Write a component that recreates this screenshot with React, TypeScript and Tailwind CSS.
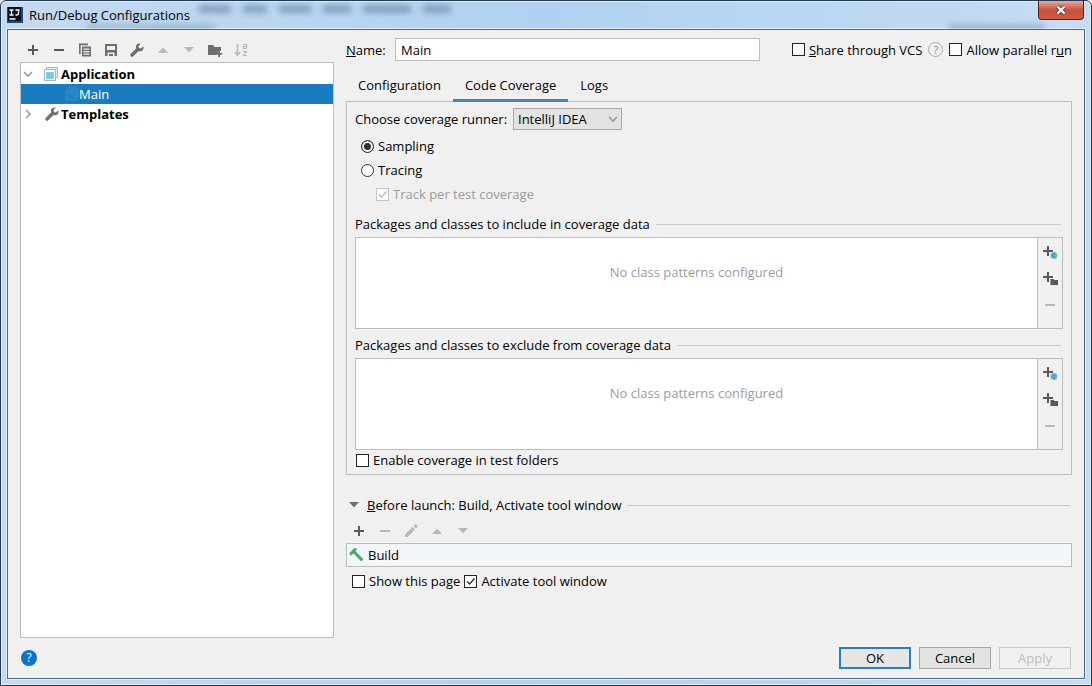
import { useState } from "react";
import type { ReactNode } from "react";

type IconProps = { className?: string };

const PlusIcon = ({ className = "text-[#595959]" }: IconProps) => (
  <svg width="16" height="16" viewBox="0 0 16 16" className={className} aria-hidden="true">
    <path d="M7 3h2v4h4v2H9v4H7V9H3V7h4z" fill="currentColor" />
  </svg>
);

const MinusIcon = ({ className = "text-[#595959]" }: IconProps) => (
  <svg width="16" height="16" viewBox="0 0 16 16" className={className} aria-hidden="true">
    <path d="M3 7h10v2H3z" fill="currentColor" />
  </svg>
);

const CopyIcon = () => (
  <svg width="16" height="16" viewBox="0 0 16 16" aria-hidden="true">
    <path d="M2 1.500h9v1.700H3.700V12H2z" fill="#6e6e6e" />
    <path d="M5 4.500h9v10H5zM6.500 6.500v1.200h6V6.500zm0 2.500v1.200h6V9zm0 2.500v1.200h6v-1.200z" fill="#6e6e6e" fillRule="evenodd" />
  </svg>
);

const SaveIcon = () => (
  <svg width="16" height="16" viewBox="0 0 16 16" aria-hidden="true">
    <path d="M2 2h12v12h-2.500v-3.500h-7V14H2zM4 4v4h8V4z" fill="#6e6e6e" fillRule="evenodd" />
    <path d="M6 12h4v2H6z" fill="#6e6e6e" />
  </svg>
);

const WrenchIcon = ({ className = "text-[#6e6e6e]" }: IconProps) => (
  <svg width="16" height="16" viewBox="0 0 16 16" className={className} aria-hidden="true">
    <path
      d="M14.300 4.300 12 6.400 9.900 5.900 9.500 3.900 11.700 1.800C9.900 1.200 8 1.900 7.200 3.500c-.5 1-.5 2 0 3L1.800 11.800a1.600 1.600 0 0 0 2.400 2.400L9.600 9c1.500.6 3.200.2 4.200-1 .9-1.100 1-2.500.5-3.700z"
      fill="currentColor"
    />
  </svg>
);

const UpIcon = () => (
  <svg width="16" height="16" viewBox="0 0 16 16" aria-hidden="true">
    <path d="M8 5.500 13 11H3z" fill="#b9b9b9" />
  </svg>
);

const DownIcon = ({ className = "text-[#b9b9b9]" }: IconProps) => (
  <svg width="16" height="16" viewBox="0 0 16 16" className={className} aria-hidden="true">
    <path d="M3 5h10l-5 5.500z" fill="currentColor" />
  </svg>
);

const NewFolderIcon = () => (
  <svg width="16" height="16" viewBox="0 0 16 16" aria-hidden="true">
    <path d="M1 3h5l1.500 2H14v4h-3v2H9v2H1z" fill="#6e6e6e" />
    <path d="M11.200 8.800h1.800V11h2.200v1.800H13V15h-1.800v-2.200H9V11h2.200z" fill="#6e6e6e" />
  </svg>
);

const SortIcon = () => (
  <svg width="16" height="16" viewBox="0 0 16 16" aria-hidden="true" fill="none" stroke="#b9b9b9">
    <path d="M4.500 2v11M1.800 10l2.700 3 2.700-3" strokeWidth="1.600" />
    <path d="M10 2.500h3.500V7M13.500 4.500H10.500V6.500h3M10 9.500h3.500L10.500 13.500H14" strokeWidth="1.200" />
  </svg>
);

const PencilIcon = () => (
  <svg width="16" height="16" viewBox="0 0 16 16" aria-hidden="true" fill="#b9b9b9">
    <path d="m9.500 4 2.500 2.500L4.500 14H2v-2.500zM10.500 3l1.500-1.500a.8.8 0 0 1 1.100 0L14.500 2.900a.8.8 0 0 1 0 1.100L13 5.500z" />
  </svg>
);

const HammerIcon = () => (
  <svg width="16" height="16" viewBox="0 0 16 16" aria-hidden="true" fill="#4fa66b">
    <path d="M1 6.500 6 1.200l3.500.3L7.400 4l7.900 8.300-2.100 2.200L5.400 6.200 3.200 8.700z" />
  </svg>
);

const AddClassIcon = () => (
  <svg width="16" height="16" viewBox="0 0 16 16" aria-hidden="true">
    <path d="M5 1h2v4h4v2H7v4H5V7H1V5h4z" fill="#595959" />
    <circle cx="12" cy="10.500" r="3.500" fill="#6bbcdc" />
    <path d="M13.300 9.600a1.600 1.600 0 1 0 0 1.800" fill="none" stroke="#3a7d9c" />
  </svg>
);

const AddPackageIcon = () => (
  <svg width="16" height="16" viewBox="0 0 16 16" aria-hidden="true">
    <path d="M5 1h2v4h4v2H7v4H5V7H1V5h4z" fill="#595959" />
    <path d="M8.500 8h3l1 1H16v5H8.500z" fill="#595959" />
  </svg>
);

const AppIcon = () => (
  <svg width="14" height="14" viewBox="0 0 14 14" aria-hidden="true">
    <path d="M2.500.5h11v10h-11z" fill="#e4eaec" stroke="#a9b4ba" />
    <path d="M.5 2.500h11v11H.5z" fill="#fff" stroke="#a9b4ba" />
    <path d="M2 5h8v7H2z" fill="#7fcbe0" />
  </svg>
);

const ChevronIcon = ({ open }: { open: boolean }) => (
  <svg width="12" height="12" viewBox="0 0 12 12" aria-hidden="true" fill="none" stroke="#9a9a9a" strokeWidth="1.600">
    <path d={open ? "m2 4 4 4 4-4" : "m4 2 4 4-4 4"} />
  </svg>
);

type ToolProps = { label: string; disabled?: boolean; children: ReactNode };

const Tool = ({ label, disabled, children }: ToolProps) => (
  <button type="button" aria-label={label} disabled={disabled} className="flex h-6 w-[26px] items-center justify-center">
    {children}
  </button>
);

type CheckProps = { checked?: boolean; disabled?: boolean; children: ReactNode };

const Check = ({ checked = false, disabled, children }: CheckProps) => {
  const [on, setOn] = useState(checked);

  return (
    <label className="flex h-5 items-center gap-1 whitespace-nowrap has-[:disabled]:text-[#9b9b9b]">
      <span className="grid">
        <input
          type="checkbox"
          checked={on}
          disabled={disabled}
          onChange={() => setOn(!on)}
          className="peer col-start-1 row-start-1 size-[13px] appearance-none border border-[#222] bg-white disabled:border-[#c4c4c4]"
        />
        <svg
          width="13"
          height="13"
          viewBox="0 0 13 13"
          aria-hidden="true"
          className="pointer-events-none invisible col-start-1 row-start-1 text-[#333] peer-checked:visible peer-disabled:text-[#b8b8b8]"
        >
          <path d="m3 6.500 2.500 2.500 5-5.500" fill="none" stroke="currentColor" strokeWidth="1.400" />
        </svg>
      </span>
      <span>{children}</span>
    </label>
  );
};

type RadioProps = { label: string; checked: boolean; onSelect: () => void };

const Radio = ({ label, checked, onSelect }: RadioProps) => (
  <label className="flex h-6 items-center gap-1 pl-1.5">
    <input
      type="radio"
      name="mode"
      checked={checked}
      onChange={onSelect}
      className="size-[13px] appearance-none rounded-full border border-[#333] bg-white checked:bg-[#333] checked:shadow-[inset_0_0_0_2px_white]"
    />
    {label}
  </label>
);

const GroupTitle = ({ children }: { children: ReactNode }) => (
  <div className="flex h-5 flex-1 items-center gap-1.5 pr-0.5">
    <span>{children}</span>
    <span className="h-px flex-1 bg-[#c9c9c9]" />
  </div>
);

// Liste de motifs avec ses boutons sur le côté
const PatternList = () => (
  <div className="mt-[3px] flex h-[92px] border border-[#bcbcbc]">
    <p className="flex-1 bg-white pt-6 text-center text-[#9b9b9b]">No class patterns configured</p>
    <div className="flex w-[25px] flex-col items-center gap-0.5 border-l border-[#bcbcbc] pt-[3px]">
      <Tool label="Add class"><AddClassIcon /></Tool>
      <Tool label="Add package"><AddPackageIcon /></Tool>
      <Tool label="Remove" disabled><MinusIcon className="text-[#b9b9b9]" /></Tool>
    </div>
  </div>
);

const TitleBar = () => (
  <header className="relative flex h-7 items-center gap-1.5 overflow-hidden">
    {/* Fenêtre floue visible derrière le verre */}
    <div aria-hidden="true" className="absolute inset-0 flex flex-col justify-between blur-[3px]">
      <div className="flex gap-3 pt-1 pl-48">
        <span className="h-2 w-8 bg-[#5f7ba0]/60" />
        <span className="h-2 w-6 bg-[#5f7ba0]/60" />
        <span className="h-2 w-8 bg-[#5f7ba0]/60" />
        <span className="h-2 w-7 bg-[#5f7ba0]/60" />
        <span className="h-2 w-12 bg-[#5f7ba0]/60" />
        <span className="h-2 w-7 bg-[#5f7ba0]/60" />
      </div>
      <div className="flex justify-between pr-10 pl-20">
        <span className="h-1 w-32 bg-[#5f8fa0]/60" />
        <span className="h-1 w-24 bg-[#5f7ba0]/60" />
      </div>
    </div>
    <svg width="16" height="16" viewBox="0 0 16 16" className="relative" aria-hidden="true">
      <path d="M0 0h16v16H0z" fill="#1d4a78" />
      <path d="M1 0h13v14H1z" fill="#0b1220" />
      <path d="M2.500 3h4M4.500 3v5M2.500 8h4M8.500 3h4M11.500 3v3.500q0 1.500-1.500 1.500H8.500M2.500 12h6" stroke="#fff" strokeWidth="1.300" fill="none" />
    </svg>
    <h1 className="relative">Run/Debug Configurations</h1>
    <button
      type="button"
      aria-label="Close"
      className="relative mr-px ml-auto flex h-[19px] w-[46px] items-center justify-center self-start rounded-b-sm border border-t-0 border-[#5a1d1d] bg-linear-to-b from-[#e3aaa0] via-[#c8503f] to-[#cf5a45]"
    >
      <svg width="12" height="10" viewBox="0 0 12 10" aria-hidden="true">
        <path d="m2.500 1.500 7 7M9.500 1.500l-7 7" stroke="#5f3434" strokeWidth="4" />
        <path d="m2.500 1.500 7 7M9.500 1.500l-7 7" stroke="#fff" strokeWidth="2.400" />
      </svg>
    </button>
  </header>
);

const Sidebar = () => (
  <aside className="flex w-[314px] shrink-0 flex-col">
    <div className="flex">
      <Tool label="Add"><PlusIcon /></Tool>
      <Tool label="Remove"><MinusIcon /></Tool>
      <Tool label="Copy"><CopyIcon /></Tool>
      <Tool label="Save"><SaveIcon /></Tool>
      <Tool label="Edit templates"><WrenchIcon /></Tool>
      <Tool label="Move up" disabled><UpIcon /></Tool>
      <Tool label="Move down" disabled><DownIcon /></Tool>
      <Tool label="New folder"><NewFolderIcon /></Tool>
      <Tool label="Sort" disabled><SortIcon /></Tool>
    </div>
    <ul role="tree" className="flex-1 border border-[#bcbcbc] bg-white pt-px">
      <li role="treeitem" aria-expanded="true" className="flex h-5 items-center pl-px font-bold">
        <ChevronIcon open />
        <span className="mr-[3px] ml-2.5"><AppIcon /></span>
        Application
      </li>
      <li role="treeitem" aria-selected="true" className="flex h-5 items-center bg-[#1a7bc0] pl-11 text-white">
        <span className="opacity-10"><AppIcon /></span>
        Main
      </li>
      <li role="treeitem" aria-expanded="false" className="flex h-5 items-center pl-px font-bold">
        <ChevronIcon open={false} />
        <span className="mr-px ml-2.5"><WrenchIcon /></span>
        Templates
      </li>
    </ul>
  </aside>
);

const tabs = ["Configuration", "Code Coverage", "Logs"];

const CoveragePanel = () => {
  const [mode, setMode] = useState("sampling");

  return (
    <section className="border border-[#bcbcbc] px-2 pt-1.5 pb-1">
      <div className="flex items-center">
        <label htmlFor="runner" className="w-[158px]">Choose coverage runner:</label>
        <div className="relative">
          <select id="runner" className="h-[22px] w-[109px] appearance-none border border-[#a6a6a6] bg-[#e3e3e3] pl-1">
            <option>IntelliJ IDEA</option>
          </select>
          <span className="pointer-events-none absolute top-[5px] right-[3px]"><ChevronIcon open /></span>
        </div>
      </div>
      <div className="mt-1">
        <Radio label="Sampling" checked={mode === "sampling"} onSelect={() => setMode("sampling")} />
        <Radio label="Tracing" checked={mode === "tracing"} onSelect={() => setMode("tracing")} />
        <div className="py-0.5 pl-[21px]">
          <Check checked disabled>Track per test coverage</Check>
        </div>
      </div>
      <div className="mt-2">
        <GroupTitle>Packages and classes to include in coverage data</GroupTitle>
        <PatternList />
      </div>
      <div className="mt-1.5">
        <GroupTitle>Packages and classes to exclude from coverage data</GroupTitle>
        <PatternList />
      </div>
      <div className="pl-px">
        <Check>Enable coverage in test folders</Check>
      </div>
    </section>
  );
};

const BeforeLaunch = () => (
  <section className="mt-5">
    <div className="flex items-center gap-[5px]">
      <button type="button" aria-label="Collapse" className="h-4 w-4"><DownIcon className="text-[#6e6e6e]" /></button>
      <GroupTitle><u>B</u>efore launch: Build, Activate tool window</GroupTitle>
    </div>
    <div className="mt-1 flex">
      <Tool label="Add task"><PlusIcon /></Tool>
      <Tool label="Remove task" disabled><MinusIcon className="text-[#b9b9b9]" /></Tool>
      <Tool label="Edit task" disabled><PencilIcon /></Tool>
      <Tool label="Move task up" disabled><UpIcon /></Tool>
      <Tool label="Move task down" disabled><DownIcon /></Tool>
    </div>
    <ul className="border border-[#bcbcbc] bg-[#f2f6f9]">
      <li className="flex h-[22px] items-center gap-1 pl-px"><HammerIcon />Build</li>
    </ul>
    <div className="mt-1 flex gap-1 pl-1.5">
      <Check>Show this page</Check>
      <Check checked>Activate tool window</Check>
    </div>
  </section>
);

const App = () => {
  const [active, setActive] = useState("Code Coverage");

  return (
    <div className="flex min-h-screen flex-col rounded-t-md border border-[#22384f] bg-linear-to-r from-[#c5daf0] via-[#b0d1f1] to-[#c6dcf3] px-1.5 pb-1.5 font-['Open_Sans','Noto_Sans',sans-serif] text-[13px] leading-5 text-black shadow-[inset_0_0_0_1px_#e4f0fb]">
      <TitleBar />
      <main className="flex flex-1 flex-col border border-[#4d6a80] bg-[#f0f0f0] px-3 pt-2 pb-[9px] shadow-[0_0_0_1px_#e4f0fb]">
        <div className="flex flex-1 gap-3">
          <Sidebar />
          <div className="min-w-0 flex-1">
            <div className="flex h-[23px] items-center">
              <label htmlFor="name" className="w-[49px]"><u>N</u>ame:</label>
              <input id="name" defaultValue="Main" className="mr-8 h-[23px] min-w-0 flex-1 border border-[#bcbcbc] bg-white px-[5px]" />
              <Check><u>S</u>hare through VCS</Check>
              <button type="button" aria-label="Help on sharing" className="mx-1.5 flex size-[15px] items-center justify-center rounded-full border border-[#aaa] text-[11px] text-[#888]">
                ?
              </button>
              <Check>Allow parallel r<u>u</u>n</Check>
            </div>
            <div role="tablist" className="mt-[9px] -mb-px flex">
              {tabs.map((tab) => (
                <button
                  key={tab}
                  type="button"
                  role="tab"
                  aria-selected={tab === active}
                  onClick={() => setActive(tab)}
                  className="relative h-8 border-b-3 border-transparent px-3 aria-selected:border-[#4a80bb]"
                >
                  {tab}
                </button>
              ))}
            </div>
            <CoveragePanel />
            <BeforeLaunch />
          </div>
        </div>
        <footer className="mt-[9px] flex items-center gap-2 px-px">
          <button type="button" aria-label="Help" className="mr-auto flex size-4 items-center justify-center rounded-full bg-[#0f71c8] text-xs text-white">
            ?
          </button>
          <button type="button" className="h-[22px] w-[72px] border-2 border-[#2b7fc0] bg-[#e6e6e6] leading-4">OK</button>
          <button type="button" className="h-[22px] w-[72px] border border-[#a6a6a6] bg-[#e3e3e3] leading-4">Cancel</button>
          <button type="button" disabled className="h-[22px] w-[72px] border border-[#c9c9c9] leading-4 text-[#bdbdbd]">Apply</button>
        </footer>
      </main>
    </div>
  );
};

export default App;
